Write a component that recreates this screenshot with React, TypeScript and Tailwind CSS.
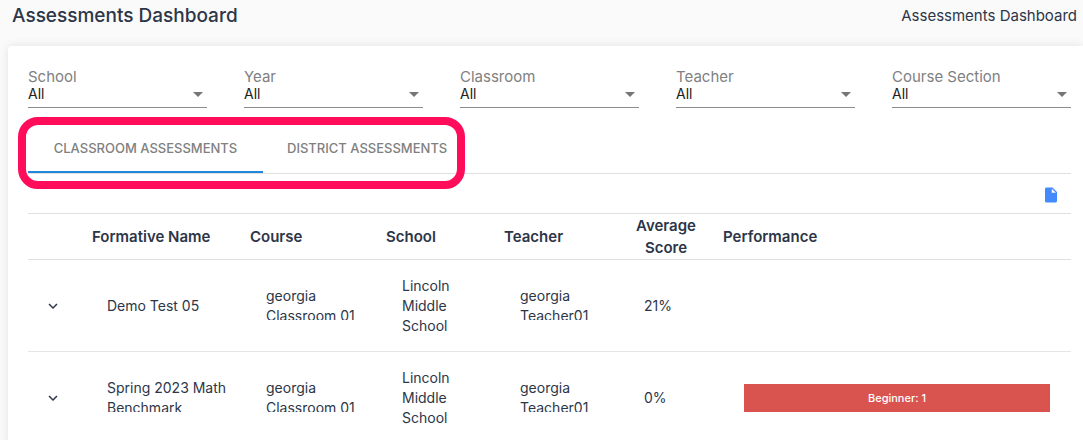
import React, { useState } from 'react';
import { MdExpandMore, MdInsertDriveFile } from 'react-icons/md';

interface Assessment {
  name: string;
  course: string;
  school: string;
  teacher: string;
  score: string;
  performance?: string;
}

const filters = ['School', 'Year', 'Classroom', 'Teacher', 'Course Section'];

const assessments: Assessment[] = [
  {
    name: 'Demo Test 05',
    course: 'georgia Classroom 01',
    school: 'Lincoln Middle School',
    teacher: 'georgia Teacher01',
    score: '21%',
  },
  {
    name: 'Spring 2023 Math Benchmark',
    course: 'georgia Classroom 01',
    school: 'Lincoln Middle School',
    teacher: 'georgia Teacher01',
    score: '0%',
    performance: 'Beginner: 1',
  },
];

const FilterSelect: React.FC<{ label: string }> = ({ label }) => {
  const id = label.toLowerCase().replace(' ', '-');

  return (
    <div className="min-w-0">
      <label htmlFor={id} className="block text-[15px] leading-4 text-[#808080]">
        {label}
      </label>
      <div className="relative border-b border-[#8c8c8c]">
        <select
          id={id}
          className="block h-[22px] w-full appearance-none bg-transparent pb-1 text-sm leading-4 text-[#212121] outline-none"
        >
          <option>All</option>
        </select>
        <svg className="pointer-events-none absolute right-1 top-[7px] h-[5px] w-[10px]" viewBox="0 0 10 5">
          <path d="M0 0h10L5 5z" fill="#757575" />
        </svg>
      </div>
    </div>
  );
};

// Two-line cells cut off the bottom of their last line
const ClippedText: React.FC<{ children: React.ReactNode }> = ({ children }) => (
  <div className="flex h-10 items-start">
    <div className="max-h-[34px] overflow-hidden">{children}</div>
  </div>
);

const AssessmentRow: React.FC<{ item: Assessment }> = ({ item }) => (
  <tr className="h-[92px] border-b border-[#e4e5e7]">
    <td className="pl-4">
      <button type="button" aria-label={`Expand ${item.name}`} className="block">
        <MdExpandMore size={18} />
      </button>
    </td>
    <td className="pl-[15px] pr-4">
      {item.name.length > 16 ? <ClippedText>{item.name}</ClippedText> : item.name}
    </td>
    <td className="pl-4 pr-2">
      <ClippedText>{item.course}</ClippedText>
    </td>
    <td className="pl-4 pr-10">{item.school}</td>
    <td className="pl-4 pr-4">
      <ClippedText>{item.teacher}</ClippedText>
    </td>
    <td className="pl-5">{item.score}</td>
    <td className="pl-9 pr-[21px]">
      {item.performance && (
        <div className="flex h-7 items-center justify-center bg-[#d9534f] text-[11px] font-medium text-white">
          {item.performance}
        </div>
      )}
    </td>
  </tr>
);

export default function App() {
  const [activeTab, setActiveTab] = useState<'classroom' | 'district'>('classroom');

  return (
    <div className="min-h-screen overflow-hidden bg-[#fafafa] font-['Inter',sans-serif] text-[#2c3648]">
      <header className="flex h-[46px] items-start justify-between pl-3 pr-[6px] pt-1">
        <h1 className="text-[19px] font-medium leading-6">Assessments Dashboard</h1>
        <span className="text-[15px] leading-6">Assessments Dashboard</span>
      </header>

      <main className="ml-2 rounded-tl bg-white pl-5 pr-3 pt-[23px] shadow-[0_0_10px_rgba(0,0,0,0.1)]">
        <div className="grid grid-cols-5 gap-[37px]">
          {filters.map((label) => (
            <FilterSelect key={label} label={label} />
          ))}
        </div>

        <div className="mt-4 border-b border-[#e0e0e0]">
          <div role="tablist" className="relative inline-flex align-top">
            <button
              type="button"
              role="tab"
              aria-selected={activeTab === 'classroom'}
              onClick={() => setActiveTab('classroom')}
              className="h-[49px] min-w-[235px] whitespace-nowrap border-b-2 border-transparent px-6 pt-0.5 text-[13px] font-medium text-[#808080] aria-selected:border-[#2286dc]"
            >
              CLASSROOM ASSESSMENTS
            </button>
            <button
              type="button"
              role="tab"
              aria-selected={activeTab === 'district'}
              onClick={() => setActiveTab('district')}
              className="h-[49px] min-w-[208px] whitespace-nowrap border-b-2 border-transparent px-6 pt-0.5 text-[13px] font-medium text-[#808080] aria-selected:border-[#2286dc]"
            >
              DISTRICT ASSESSMENTS
            </button>
            <div className="pointer-events-none absolute -bottom-4 -left-[10px] -top-[7px] right-[6px] rounded-[20px] border-8 border-[#ff0d5b]" />
          </div>
        </div>

        <div className="flex h-[39px] items-center justify-end pr-[11px] pt-0.5">
          <button type="button" aria-label="Export file" className="text-[#448aff]">
            <MdInsertDriveFile size={18} />
          </button>
        </div>

        <table className="w-full table-fixed border-collapse text-left text-sm leading-5">
          <colgroup>
            <col className="w-16" />
            <col className="w-[158px]" />
            <col className="w-[136px]" />
            <col className="w-[118px]" />
            <col className="w-[120px]" />
            <col className="w-[84px]" />
            <col />
          </colgroup>
          <thead>
            <tr className="h-[46px] border-y border-[#e0e0e0] text-[15px] leading-[22px]">
              <th aria-label="Expand" />
              <th className="font-semibold">Formative Name</th>
              <th className="font-semibold">Course</th>
              <th className="font-semibold">School</th>
              <th className="font-semibold">Teacher</th>
              <th className="text-center font-semibold">Average Score</th>
              <th className="pl-[15px] font-semibold">Performance</th>
            </tr>
          </thead>
          <tbody>
            {assessments.map((item) => (
              <AssessmentRow key={item.name} item={item} />
            ))}
          </tbody>
        </table>
      </main>
    </div>
  );
}
